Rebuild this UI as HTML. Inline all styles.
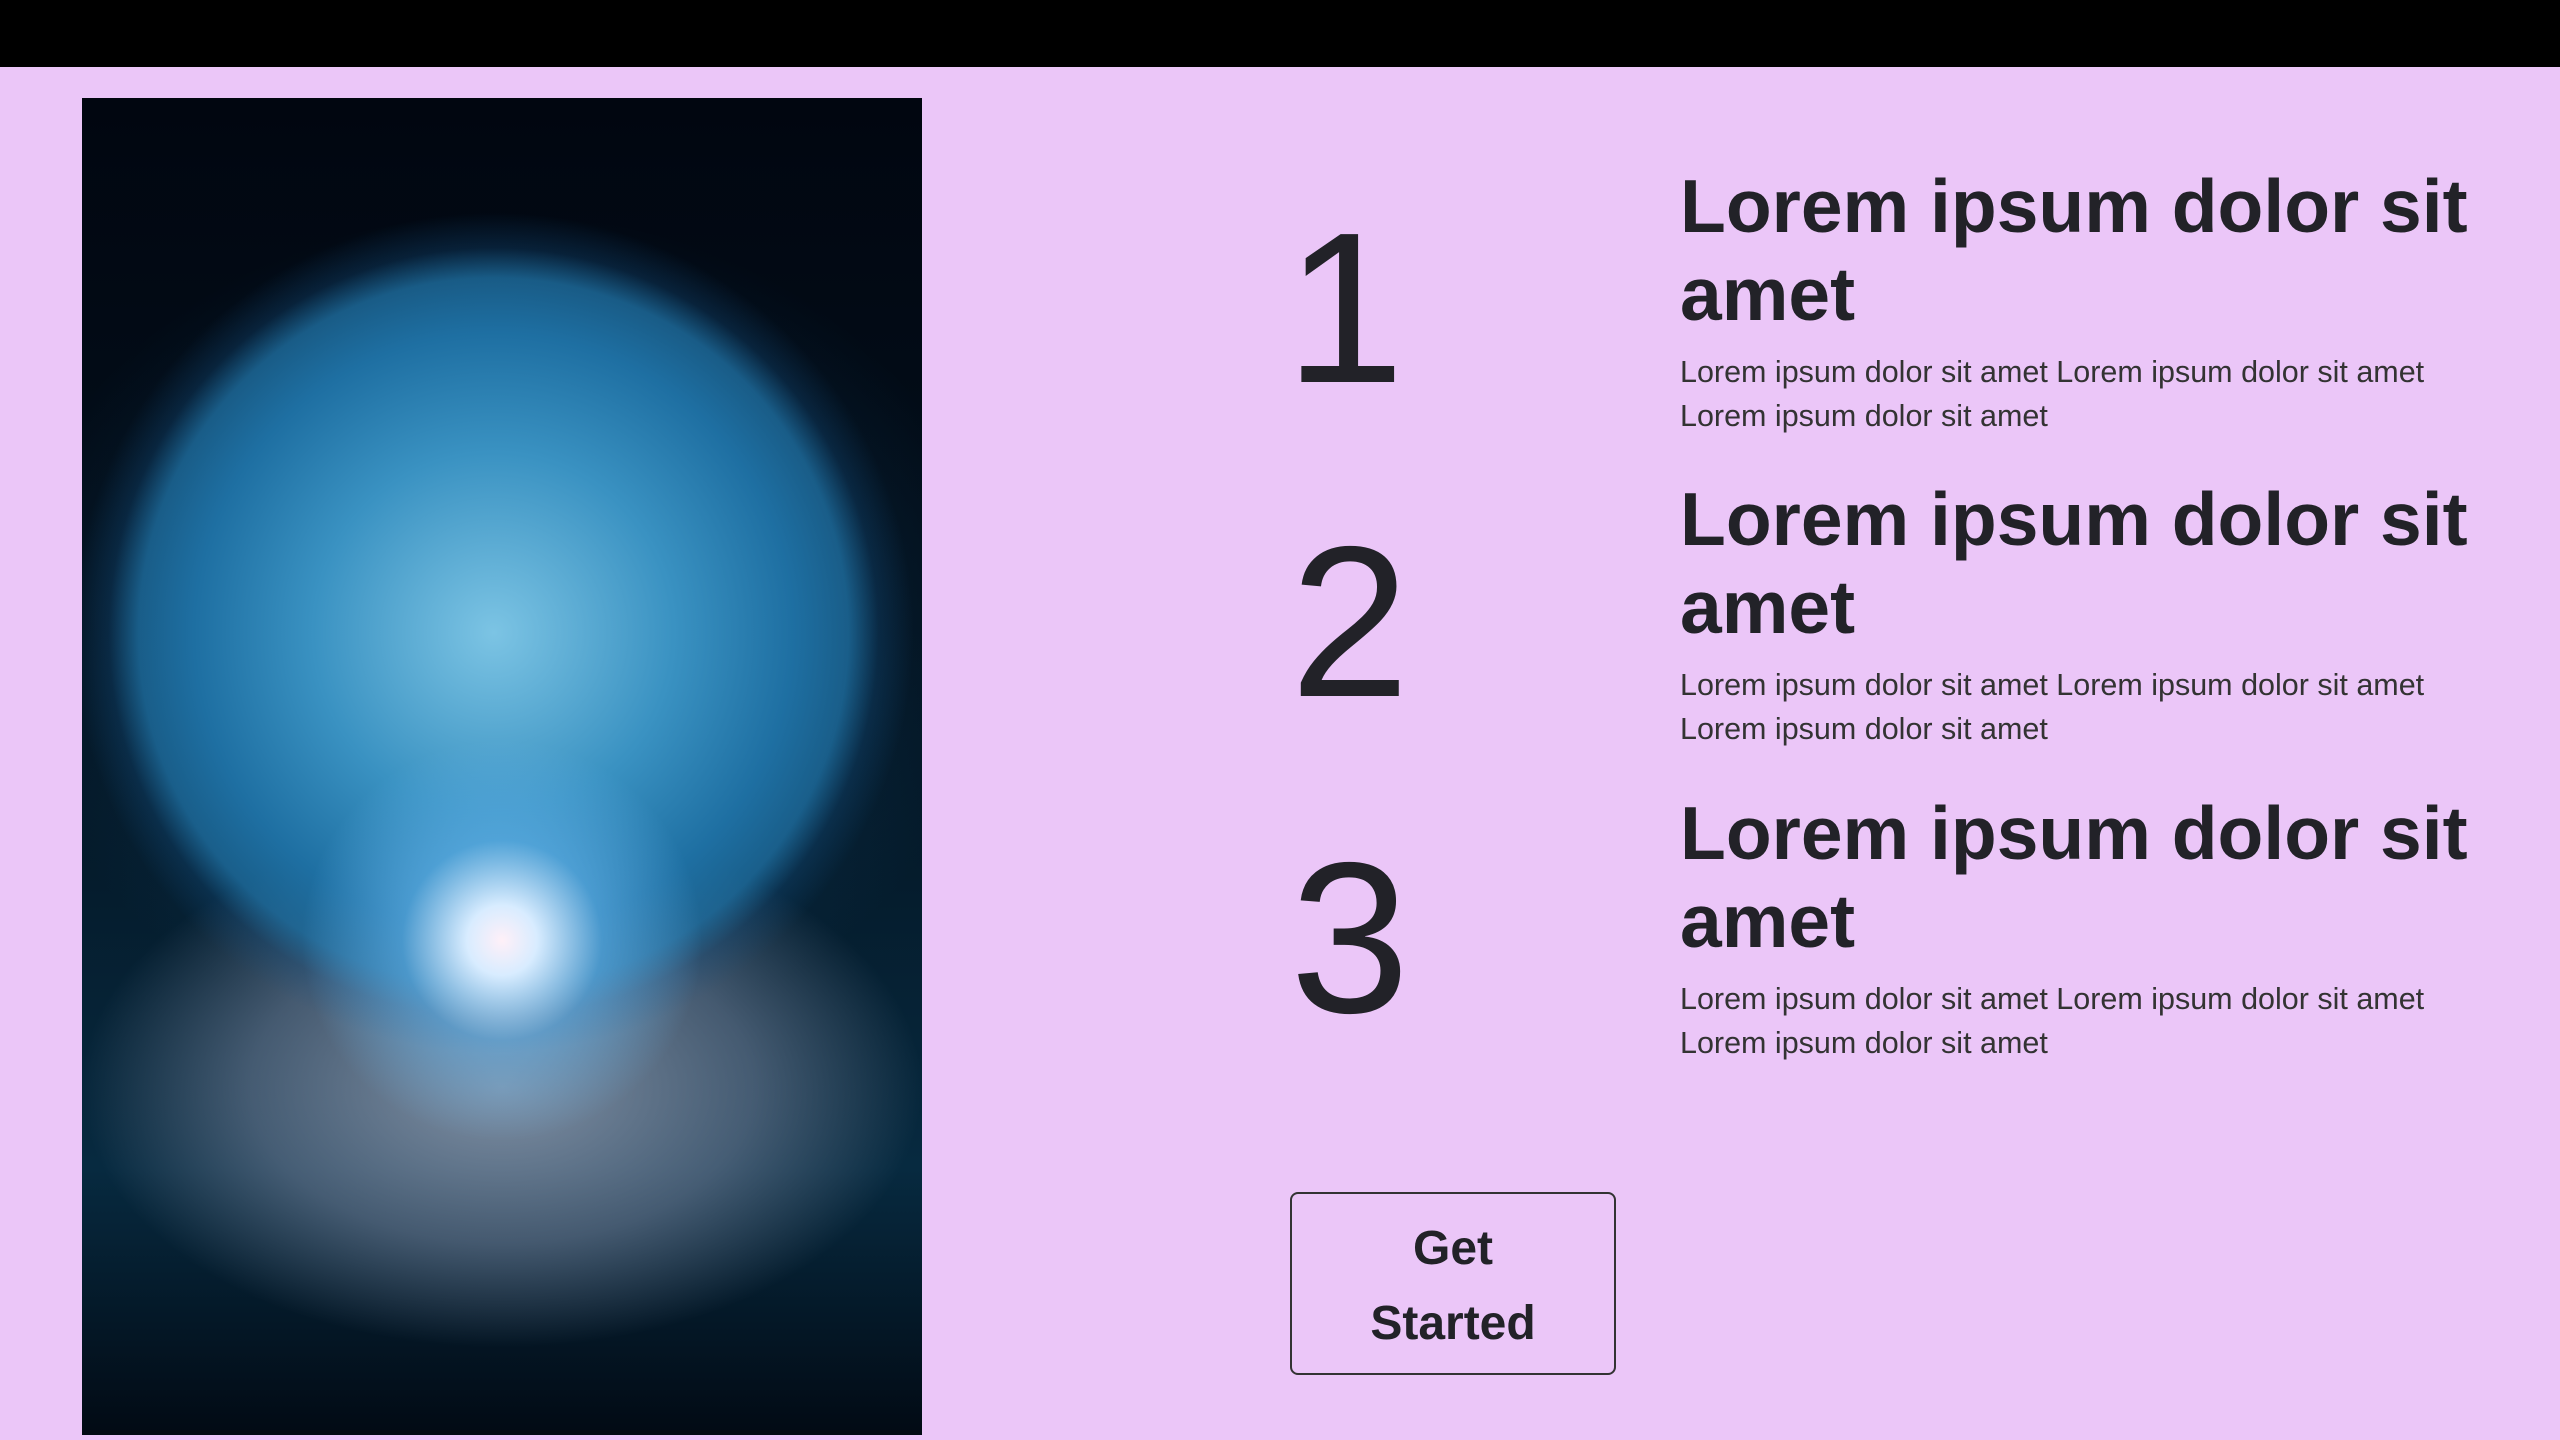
<!DOCTYPE html>
<html><head><meta charset="utf-8"><style>
*{margin:0;padding:0;box-sizing:border-box}
body{width:2560px;height:1440px;background:#ebc6f8;font-family:"Liberation Sans",sans-serif;color:#222228;position:relative;overflow:hidden}
.top{position:absolute;left:0;top:0;width:2560px;height:67px;background:#000}
.img{position:absolute;left:82px;top:98px;width:840px;height:1337px;overflow:hidden;
background:
radial-gradient(circle at 50% 63%,#fff0f8 0,#d8ecff 35px,rgba(100,180,235,.6) 100px,rgba(0,0,0,0) 200px),
radial-gradient(circle at 49% 40%,#7cc4e4 0,#3a92c2 180px,#1e6fa2 300px,rgba(30,110,160,.8) 355px,rgba(20,80,130,.3) 385px,rgba(0,0,0,0) 420px),
radial-gradient(ellipse 420px 260px at 50% 74%,rgba(170,180,200,.75) 0,rgba(120,135,160,.55) 60%,rgba(0,0,0,0) 100%),
radial-gradient(ellipse 500px 420px at 50% 40%,rgba(20,90,140,.5) 0,rgba(0,0,0,0) 100%),
linear-gradient(#010610,#03101c 40%,#072a40 80%,#020a14)}
.num{position:absolute;font-size:215px;line-height:1;font-weight:400}
.h{position:absolute;left:1680px;font-size:75px;font-weight:bold;line-height:88px;width:860px}
.p{position:absolute;left:1680px;font-size:30.5px;line-height:44px;color:#333}
.btn{position:absolute;left:1290px;top:1192px;width:326px;height:183px;border:2px solid #333;border-radius:8px;text-align:center;font-size:48px;font-weight:bold;line-height:75px;padding-top:17px}
</style></head><body>
<div class="top"></div>
<div class="img"></div>
<div class="num" style="left:1285px;top:200px">1</div>
<div class="num" style="left:1290px;top:514px">2</div>
<div class="num" style="left:1290px;top:830px">3</div>
<div class="h" style="top:162px">Lorem ipsum dolor sit amet</div>
<div class="p" style="top:350px">Lorem ipsum dolor sit amet Lorem ipsum dolor sit amet<br>Lorem ipsum dolor sit amet</div>
<div class="h" style="top:475px">Lorem ipsum dolor sit amet</div>
<div class="p" style="top:663px">Lorem ipsum dolor sit amet Lorem ipsum dolor sit amet<br>Lorem ipsum dolor sit amet</div>
<div class="h" style="top:789px">Lorem ipsum dolor sit amet</div>
<div class="p" style="top:977px">Lorem ipsum dolor sit amet Lorem ipsum dolor sit amet<br>Lorem ipsum dolor sit amet</div>
<div class="btn">Get<br>Started</div>
</body></html>
